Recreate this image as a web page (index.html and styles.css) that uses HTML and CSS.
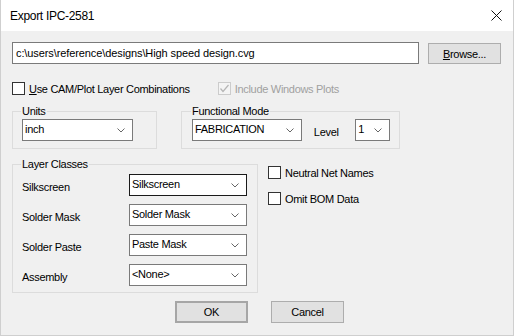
FILE: index.html
```html
<!DOCTYPE html>
<html lang="en">

<head>
    <meta charset="UTF-8" />
    <title>Export IPC-2581</title>
    <link rel="stylesheet" href="styles.css">
</head>

<body>
    <div class="dialog">
        <div class="titlebar">
            <span class="title">Export IPC-2581</span>
            <svg class="close" width="11" height="11" viewBox="0 0 11 11">
                <path d="M0.5 0.5 L10.5 10.5 M10.5 0.5 L0.5 10.5" stroke="#111" stroke-width="1" fill="none" />
            </svg>
        </div>

        <div class="content">
            <!-- output file -->
            <div class="file-row">
                <div class="textbox">c:\users\reference\designs\High speed design.cvg</div>
                <button class="btn browse"><u>B</u>rowse...</button>
            </div>

            <div class="check-row">
                <label class="check"><span class="box"></span><span><u>U</u>se CAM/Plot Layer Combinations</span></label>
                <label class="check disabled include">
                    <span class="box">
                        <svg width="11" height="11" viewBox="0 0 11 11">
                            <path d="M1.5 5.5 L4 8.5 L9.5 2" stroke="#b5b5b5" stroke-width="1.2" fill="none" />
                        </svg>
                    </span>
                    <span>Include Windows Plots</span>
                </label>
            </div>

            <div class="group-row">
                <fieldset class="group units">
                    <legend>Units</legend>
                    <div class="combo w-units">inch<svg class="arrow" width="8" height="5" viewBox="0 0 8 5"><path d="M0.5 0.5 L4 4 L7.5 0.5" stroke="#666" fill="none" /></svg></div>
                </fieldset>
                <fieldset class="group mode">
                    <legend>Functional Mode</legend>
                    <div class="mode-row">
                        <div class="combo w-mode">FABRICATION<svg class="arrow" width="8" height="5" viewBox="0 0 8 5"><path d="M0.5 0.5 L4 4 L7.5 0.5" stroke="#666" fill="none" /></svg></div>
                        <span class="level-label">Level</span>
                        <div class="combo w-level">1<svg class="arrow" width="8" height="5" viewBox="0 0 8 5"><path d="M0.5 0.5 L4 4 L7.5 0.5" stroke="#666" fill="none" /></svg></div>
                    </div>
                </fieldset>
            </div>

            <div class="layer-row">
                <fieldset class="group layers">
                    <legend>Layer Classes</legend>
                    <div class="layer-grid">
                        <span>Silkscreen</span>
                        <div class="combo focused">Silkscreen<svg class="arrow" width="8" height="5" viewBox="0 0 8 5"><path d="M0.5 0.5 L4 4 L7.5 0.5" stroke="#666" fill="none" /></svg></div>
                        <span>Solder Mask</span>
                        <div class="combo">Solder Mask<svg class="arrow" width="8" height="5" viewBox="0 0 8 5"><path d="M0.5 0.5 L4 4 L7.5 0.5" stroke="#666" fill="none" /></svg></div>
                        <span>Solder Paste</span>
                        <div class="combo">Paste Mask<svg class="arrow" width="8" height="5" viewBox="0 0 8 5"><path d="M0.5 0.5 L4 4 L7.5 0.5" stroke="#666" fill="none" /></svg></div>
                        <span>Assembly</span>
                        <div class="combo">&lt;None&gt;<svg class="arrow" width="8" height="5" viewBox="0 0 8 5"><path d="M0.5 0.5 L4 4 L7.5 0.5" stroke="#666" fill="none" /></svg></div>
                    </div>
                </fieldset>

                <div class="options">
                    <label class="check"><span class="box"></span><span>Neutral Net Names</span></label>
                    <label class="check"><span class="box"></span><span>Omit BOM Data</span></label>
                </div>
            </div>

            <div class="buttons">
                <button class="btn default">OK</button>
                <button class="btn">Cancel</button>
            </div>
        </div>
    </div>
</body>

</html>
```

FILE: styles.css
```css
body {
    margin: 0;
    padding: 0;
    background: #fff;
    font-family: 'Liberation Sans', Arial, sans-serif;
    font-size: 11px;
    letter-spacing: -0.3px;
    color: #000;
}

.dialog {
    width: 514px;
    height: 336px;
    box-sizing: border-box;
    border: 1px solid #cfcfcf;
    border-top: none;
    background: #f0f0f0;
    display: flex;
    flex-direction: column;
}

.titlebar {
    height: 31px;
    background: #fff;
    display: flex;
    align-items: center;
    justify-content: space-between;
    padding: 0 11px 0 9px;
    flex-shrink: 0;
}

.title {
    font-size: 12px;
    letter-spacing: -0.3px;
    color: #000;
}

.content {
    padding: 11px 11px 0 11px;
}

.file-row {
    display: flex;
    align-items: flex-end;
}

.textbox {
    width: 407px;
    height: 22px;
    box-sizing: border-box;
    border: 1px solid #7a7a7a;
    background: #fff;
    padding: 0 3px;
    line-height: 20px;
    letter-spacing: -0.1px;
    white-space: nowrap;
}

.btn {
    font-family: inherit;
    font-size: 11px;
    letter-spacing: -0.3px;
    color: #000;
    width: 73px;
    height: 21px;
    box-sizing: border-box;
    background: #e1e1e1;
    border: 1px solid #adadad;
    padding: 0;
    margin: 0;
}

.browse {
    margin-left: 9px;
}

.default {
    border: 2px solid #a6a6a6;
}

.check-row {
    display: flex;
    margin-top: 18px;
    height: 13px;
}

.check {
    display: flex;
    align-items: center;
    gap: 4px;
    height: 13px;
    white-space: nowrap;
}

.box {
    width: 13px;
    height: 13px;
    box-sizing: border-box;
    border: 1px solid #333;
    background: #fff;
    display: flex;
    align-items: center;
    justify-content: center;
}

.include {
    margin-left: 28px;
    color: #a0a0a0;
}

.disabled .box {
    border-color: #cccccc;
    background: #f4f4f4;
}

.group {
    margin: 0;
    border: 1px solid #dcdcdc;
    min-width: 0;
}

.group legend {
    padding: 0 1px;
    margin-left: -1px;
    line-height: 13px;
}

.group-row {
    display: flex;
    margin-top: 10px;
    gap: 24px;
}

.units {
    width: 145px;
    box-sizing: border-box;
    padding: 1px 9px 7px 9px;
}

.mode {
    width: 219px;
    box-sizing: border-box;
    padding: 1px 9px 7px 10px;
}

.mode-row {
    display: flex;
    align-items: center;
}

.level-label {
    margin-left: 12px;
    width: 42px;
    padding-top: 3px;
}

.combo {
    position: relative;
    height: 22px;
    box-sizing: border-box;
    border: 1px solid #7a7a7a;
    background: #fff;
    padding: 0 2px;
    line-height: 19px;
    white-space: nowrap;
}

.combo .arrow {
    position: absolute;
    right: 7px;
    top: 8px;
}

.w-units {
    width: 111px;
}

.w-mode {
    width: 111px;
}

.w-level {
    width: 35px;
}

.layer-row {
    display: flex;
    margin-top: 9px;
}

.layers {
    width: 246px;
    box-sizing: border-box;
    padding: 3px 9px 6px 9px;
}

.layer-grid {
    display: grid;
    grid-template-columns: 107px 118px;
    row-gap: 8px;
    align-items: center;
}

.layer-grid span {
    padding-top: 3px;
}

.layer-grid .combo {
    height: 22px;
}

.focused {
    border-color: #1a1a1a;
}

.options {
    display: flex;
    flex-direction: column;
    gap: 13px;
    margin-left: 10px;
    margin-top: 8px;
}

.buttons {
    display: flex;
    gap: 23px;
    padding-left: 163px;
    margin-top: 8px;
}

.buttons .btn {
    height: 22px;
}
```
